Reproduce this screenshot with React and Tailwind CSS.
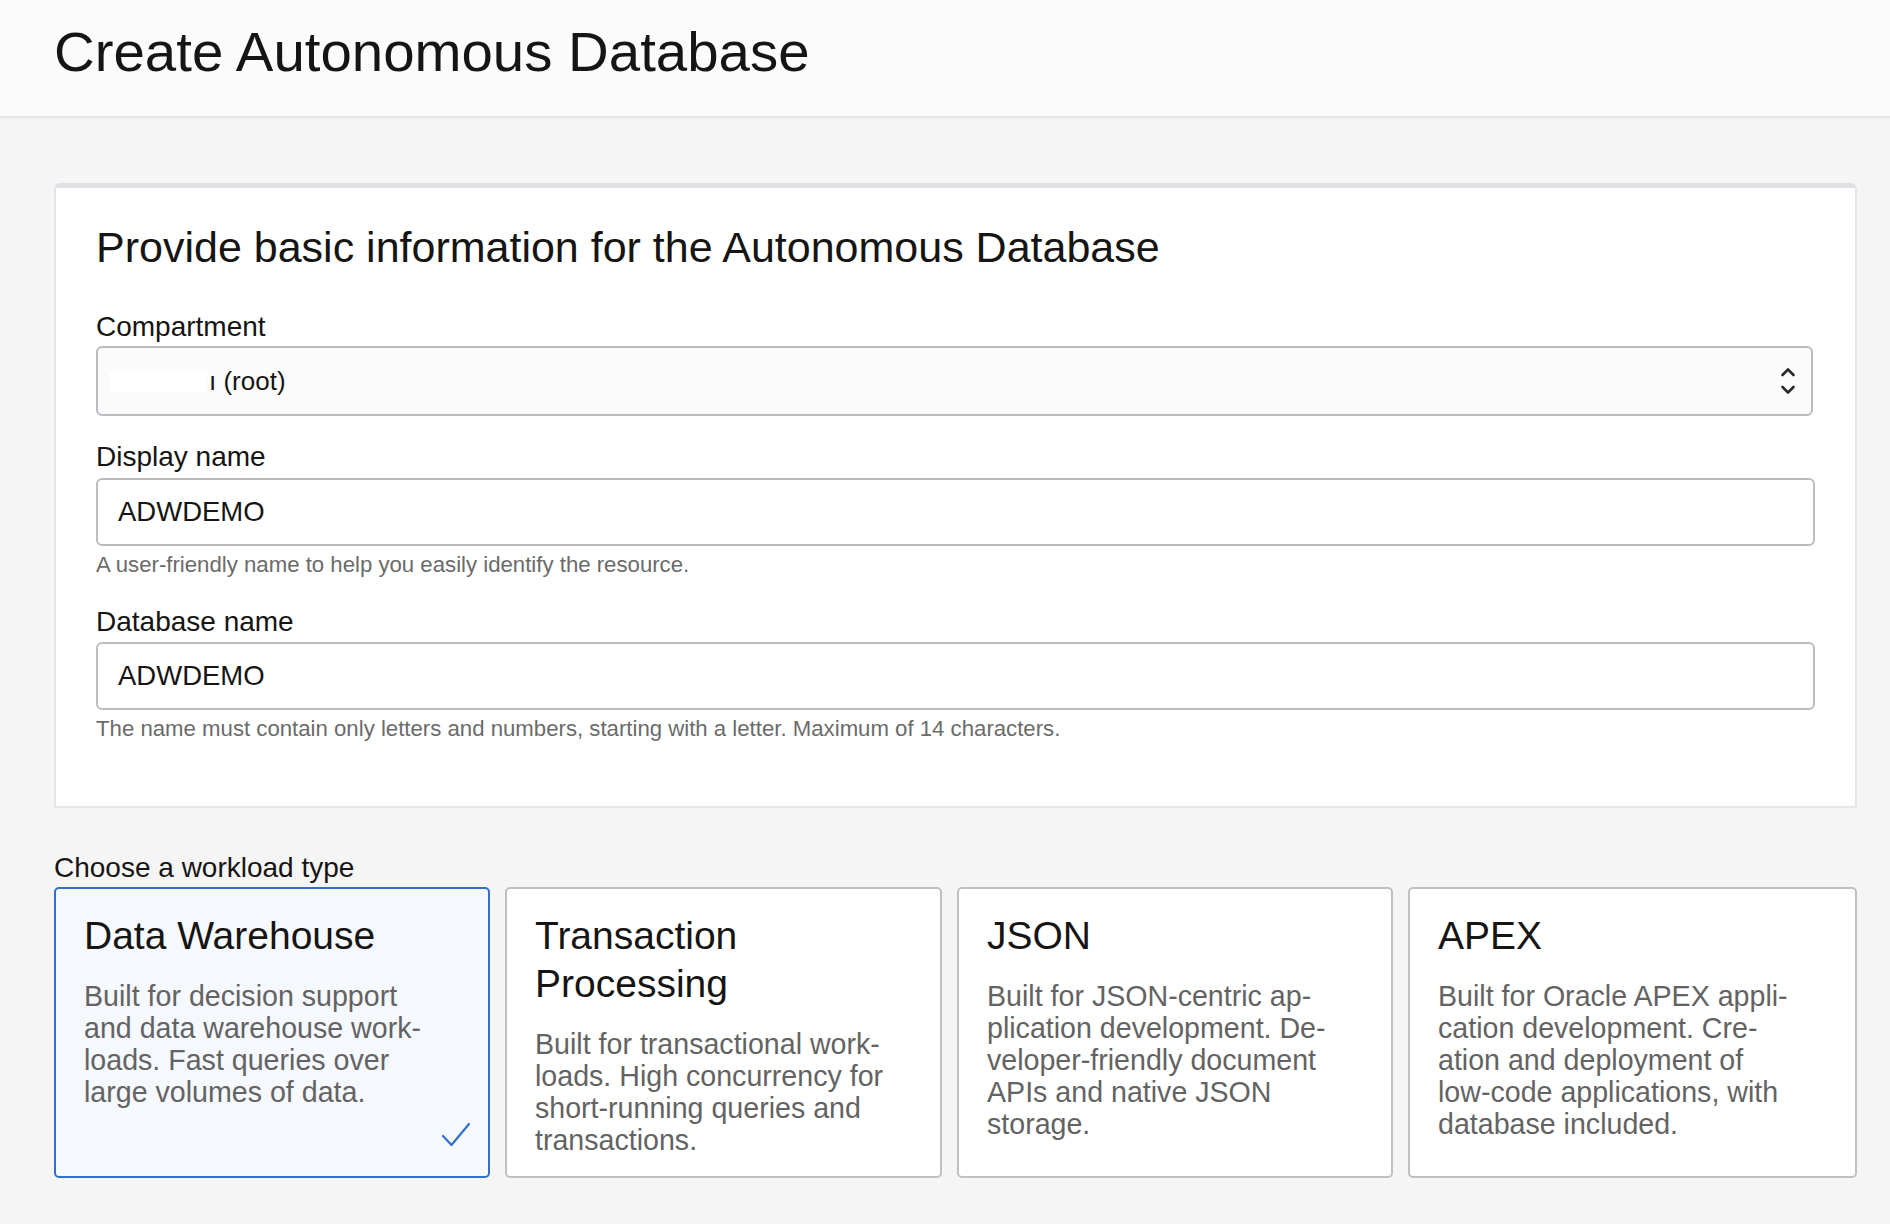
import React from "react";

const workloads = [
  {
    id: "dw",
    title: ["Data Warehouse"],
    desc: [
      "Built for decision support",
      "and data warehouse work-",
      "loads. Fast queries over",
      "large volumes of data.",
    ],
    selected: true,
  },
  {
    id: "atp",
    title: ["Transaction", "Processing"],
    desc: [
      "Built for transactional work-",
      "loads. High concurrency for",
      "short-running queries and",
      "transactions.",
    ],
  },
  {
    id: "json",
    title: ["JSON"],
    desc: [
      "Built for JSON-centric ap-",
      "plication development. De-",
      "veloper-friendly document",
      "APIs and native JSON",
      "storage.",
    ],
  },
  {
    id: "apex",
    title: ["APEX"],
    desc: [
      "Built for Oracle APEX appli-",
      "cation development. Cre-",
      "ation and deployment of",
      "low-code applications, with",
      "database included.",
    ],
  },
];

const Label = ({ children }) => (
  <div className="text-[28px] leading-[34px] text-[#161513]">{children}</div>
);

const Helper = ({ children }) => (
  <div className="mt-[6px] text-[22.2px] leading-[26px] text-[#6b6b6b]">
    {children}
  </div>
);

const TextInput = ({ value }) => (
  <div className="flex h-[68px] w-[1719px] items-center rounded-[6px] border-2 border-[#b9bcc0] bg-white px-[20px] text-[27.5px] text-[#161513]">
    {value}
  </div>
);

// up/down chevrons of the native select
const Chevrons = () => (
  <svg width="16" height="30" viewBox="0 0 16 30" fill="none">
    <path
      d="M2.5 9 L8 3.5 L13.5 9"
      stroke="#2a2a2a"
      strokeWidth="2.6"
      strokeLinecap="round"
      strokeLinejoin="round"
    />
    <path
      d="M2.5 21 L8 26.5 L13.5 21"
      stroke="#2a2a2a"
      strokeWidth="2.6"
      strokeLinecap="round"
      strokeLinejoin="round"
    />
  </svg>
);

const WorkloadCard = ({ item }) => (
  <div
    className={`relative flex h-[291px] flex-col rounded-[5px] border-2 px-[28px] pt-[23px] ${
      item.selected
        ? "border-[#2f6fcd] bg-[#f5f8fd]"
        : "border-[#bdc0c4] bg-white"
    }`}
  >
    <div className="text-[39px] leading-[48px] text-[#161513]">
      {item.title.map((t) => (
        <div key={t} className="whitespace-nowrap">
          {t}
        </div>
      ))}
    </div>
    <div className="mt-[20px] text-[28.6px] leading-[32px] text-[#636363]">
      {item.desc.map((d) => (
        <div key={d} className="whitespace-nowrap">
          {d}
        </div>
      ))}
    </div>
    {item.selected && (
      <svg
        className="absolute bottom-[28px] right-[17px]"
        width="30"
        height="26"
        viewBox="0 0 30 26"
        fill="none"
      >
        <path
          d="M2 14 L10.5 23 L28 2"
          stroke="#2f6fcd"
          strokeWidth="2.2"
          strokeLinecap="round"
          strokeLinejoin="round"
        />
      </svg>
    )}
  </div>
);

export default function App() {
  return (
    <div
      className="min-h-screen bg-[#f5f5f5]"
      style={{ fontFamily: '"Liberation Sans", Arial, sans-serif' }}
    >
      <header className="h-[118px] border-b-2 border-[#e4e4e4] bg-[#fbfbfb] px-[54px] pt-[20px]">
        <h1 className="text-[56.4px] leading-[64px] text-[#161513]">
          Create Autonomous Database
        </h1>
      </header>

      <main className="pl-[54px] pr-[33px] pt-[65px]">
        <section className="rounded-t-[6px] border-x-2 border-b-2 border-t-[5px] border-x-[#e3e4e7] border-b-[#e6e7ea] border-t-[#e0e1e5] bg-white px-[40px] pt-[33px] pb-[64px]">
          <h2 className="text-[43px] leading-[52px] text-[#161513]">
            Provide basic information for the Autonomous Database
          </h2>

          <div className="mt-[37px]">
            <Label>Compartment</Label>
            <div className="mt-[2px] flex h-[70px] w-[1717px] items-center rounded-[6px] border-2 border-[#b9bcc0] bg-[#fbfbfb] pl-[11px] pr-[15px] text-[26px] text-[#161513]">
              <span className="mr-[2px] inline-block h-[21px] w-[98px] bg-white" />
              <span>ı (root)</span>
              <span className="ml-auto flex items-center">
                <Chevrons />
              </span>
            </div>
          </div>

          <div className="mt-[24px]">
            <Label>Display name</Label>
            <div className="mt-[4px]">
              <TextInput value="ADWDEMO" />
            </div>
            <Helper>
              A user-friendly name to help you easily identify the resource.
            </Helper>
          </div>

          <div className="mt-[27px]">
            <Label>Database name</Label>
            <div className="mt-[3px]">
              <TextInput value="ADWDEMO" />
            </div>
            <Helper>
              The name must contain only letters and numbers, starting with a
              letter. Maximum of 14 characters.
            </Helper>
          </div>
        </section>

        <div className="mt-[43px]">
          <Label>Choose a workload type</Label>
          <div className="mt-[2px] grid grid-cols-[436px_437px_436px_1fr] gap-[15px]">
            {workloads.map((w) => (
              <WorkloadCard key={w.id} item={w} />
            ))}
          </div>
          <div className="mt-[41px]">
            <Label>Choose a deployment type</Label>
          </div>
        </div>
      </main>
    </div>
  );
}
